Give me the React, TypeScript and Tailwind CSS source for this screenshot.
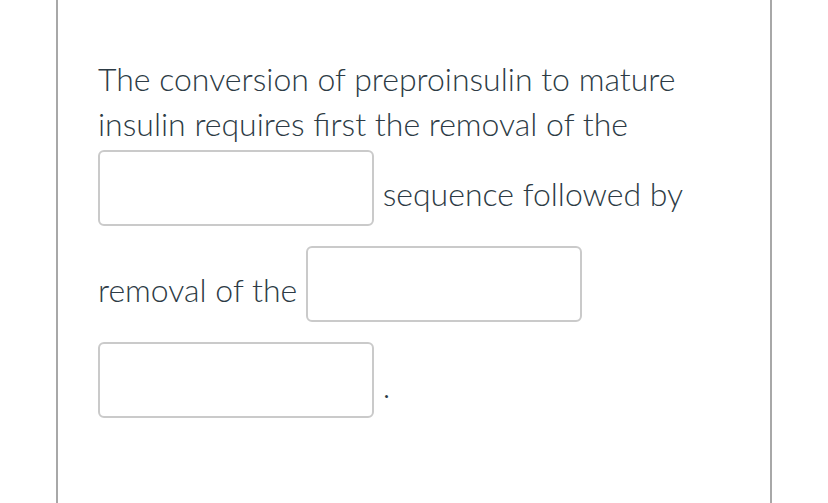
export default function App() {
  return (
    <div className="w-[828px] h-[503px] bg-white overflow-hidden">
      <div className="ml-[56px] w-[716px] h-[503px] border-x-2 border-[#a8a8a8] pl-[40px] pr-[40px] pt-[56px]">
        <p
          className="text-[32px] leading-[45px] text-[#2d3b45] font-light"
          style={{ fontFamily: "Lato, 'Open Sans', sans-serif" }}
        >
          The conversion of preproinsulin to mature insulin requires first the removal of the{" "}
          <span className="inline-block w-[276px] h-[76px] border-2 border-[#cacaca] rounded-[6px] bg-white mt-[4px] mb-[16px] align-[-36px]"></span>{" "}
          sequence followed by removal of the{" "}
          <span className="inline-block w-[276px] h-[76px] border-2 border-[#cacaca] rounded-[6px] bg-white mt-[4px] mb-[16px] align-[-36px]"></span>{" "}
          <span className="inline-block w-[276px] h-[76px] border-2 border-[#cacaca] rounded-[6px] bg-white mt-[4px] mb-[16px] align-[-36px]"></span>{" "}
          .
        </p>
      </div>
    </div>
  );
}
